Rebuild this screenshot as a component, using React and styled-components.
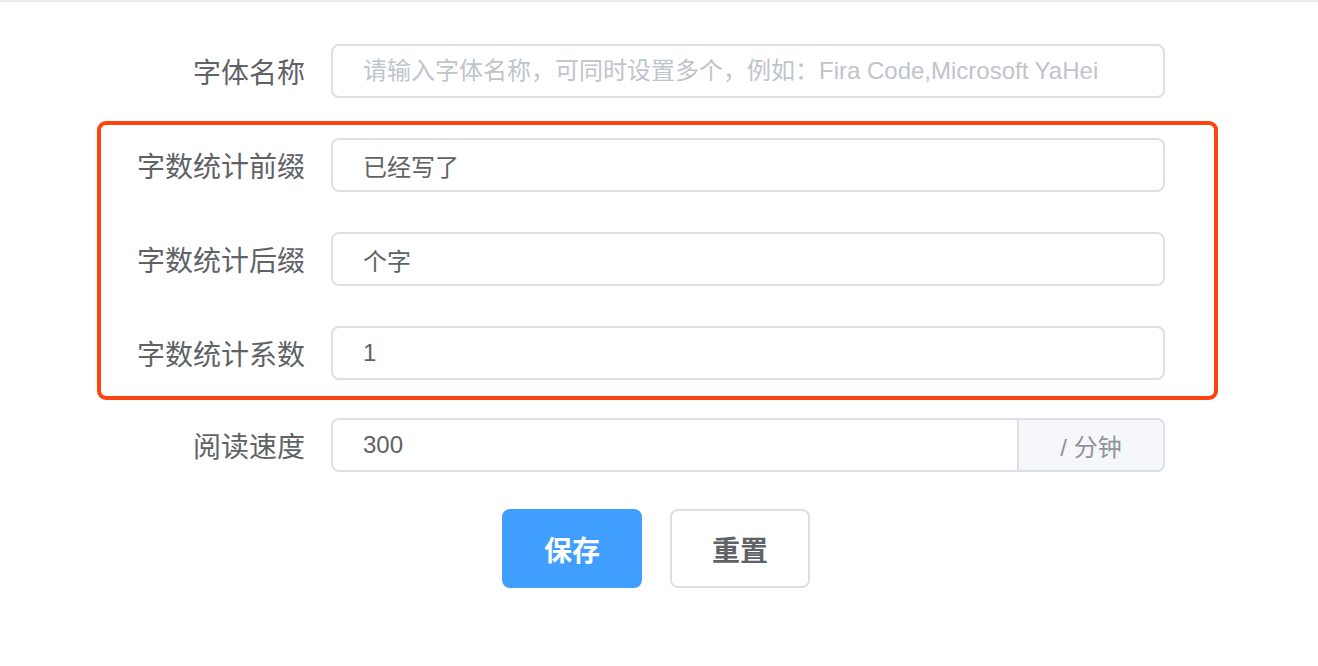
import React from 'react'
import styled, { createGlobalStyle } from 'styled-components'

const GlobalStyle = createGlobalStyle`
  html, body {
    margin: 0;
    padding: 0;
    background: #fff;
  }
  body {
    font-family: "Liberation Sans", "Noto Sans CJK SC", sans-serif;
  }
`

const Page = styled.div`
  border-top: 2px solid #e6e9ee;
  padding: 42px 0 40px;
`

const Form = styled.form`
  display: flex;
  flex-direction: column;
  gap: 40px;
  margin-left: 97px;
  width: 1068px;
`

const Group = styled.div`
  position: relative;
  display: flex;
  flex-direction: column;
  gap: 40px;
  margin-bottom: -2px;
`

const Highlight = styled.div`
  position: absolute;
  top: -17px;
  bottom: -20px;
  left: 0;
  right: -53px;
  border: 4px solid #fc4310;
  border-radius: 9px;
  pointer-events: none;
`

const Row = styled.div`
  display: flex;
  align-items: center;
  height: 54px;
`

const Label = styled.label`
  width: 208px;
  padding-right: 26px;
  text-align: right;
  font-size: 28px;
  color: #606266;
  flex-shrink: 0;
`

const InputWrap = styled.div`
  flex: 1;
  display: flex;
  height: 100%;
  border: 2px solid #dcdfe6;
  border-radius: 8px;
  overflow: hidden;
  box-sizing: border-box;
`

const Input = styled.input`
  flex: 1;
  min-width: 0;
  border: none;
  outline: none;
  padding: 0 0 0 30px;
  font-family: inherit;
  font-size: 24px;
  color: #606266;
  background: transparent;

  &::placeholder {
    color: #c0c4cc;
  }
`

const Append = styled.div`
  width: 144px;
  display: flex;
  align-items: center;
  justify-content: center;
  background: #f5f7fa;
  border-left: 2px solid #dcdfe6;
  color: #909399;
  font-size: 24px;
`

const Actions = styled.div`
  display: flex;
  justify-content: center;
  gap: 28px;
  margin-top: 37px;
  padding-right: 6px;
`

const Button = styled.button`
  width: 140px;
  height: 79px;
  border-radius: 8px;
  font-family: inherit;
  font-size: 28px;
  font-weight: 700;
  cursor: pointer;
  border: 2px solid ${p => (p.primary ? '#409eff' : '#dcdfe6')};
  background: ${p => (p.primary ? '#409eff' : '#fff')};
  color: ${p => (p.primary ? '#fff' : '#606266')};
`

const Field = ({ label, value, placeholder, append }) => (
  <Row>
    <Label>{label}</Label>
    <InputWrap>
      <Input defaultValue={value} placeholder={placeholder} />
      {append && <Append>{append}</Append>}
    </InputWrap>
  </Row>
)

const App = () => (
  <>
    <GlobalStyle />
    <Page>
      <Form onSubmit={e => e.preventDefault()}>
        <Field label="字体名称" placeholder="请输入字体名称，可同时设置多个，例如：Fira Code,Microsoft YaHei" />
        <Group>
          <Field label="字数统计前缀" value="已经写了" />
          <Field label="字数统计后缀" value="个字" />
          <Field label="字数统计系数" value="1" />
          <Highlight />
        </Group>
        <Field label="阅读速度" value="300" append="/ 分钟" />
      </Form>
      <Actions>
        <Button primary>保存</Button>
        <Button type="button">重置</Button>
      </Actions>
    </Page>
  </>
)

export default App
